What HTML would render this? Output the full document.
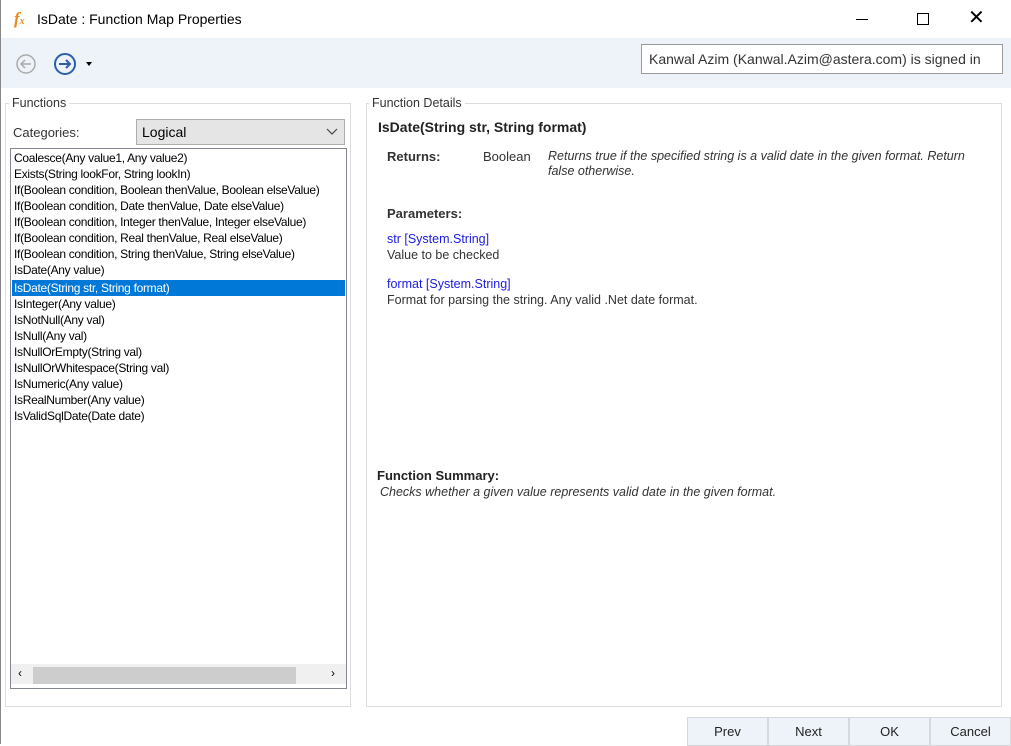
<!DOCTYPE html><html><head><style>
body{margin:0;width:1011px;height:744px;background:#fff;font-family:"Liberation Sans",sans-serif;position:relative;overflow:hidden;font-size:12px;color:#000}
.a{position:absolute}
.gb{position:absolute;border:1px solid #dcdcdc}
.gl{position:absolute;background:#fff;padding:0 3px;color:#333;font-size:12.5px}
.li{position:absolute;left:3px;white-space:nowrap;font-size:12px;letter-spacing:-0.3px;line-height:16px}
.btn{position:absolute;top:717px;width:79px;height:27px;background:#eef3f9;border:1px solid #d5d9de;text-align:center;line-height:27px;font-size:13px;color:#222}
</style></head><body>
<div class="a" style="left:0;top:0;width:1px;height:744px;background:#888"></div>
<div class="a" style="left:14px;top:9px;color:#e8891e;font-style:italic;font-weight:bold;font-family:'Liberation Serif',serif;font-size:17px">f<span style="font-size:10px">x</span></div>
<div class="a" style="left:37px;top:11px;font-size:14px">IsDate : Function Map Properties</div>
<div class="a" style="left:856px;top:19px;width:12px;height:1px;background:#000"></div>
<div class="a" style="left:917px;top:13px;width:10px;height:10px;border:1px solid #000"></div>
<div class="a" style="left:968px;top:8px;font-size:20px;line-height:20px">✕</div>
<div class="a" style="left:1px;top:38px;width:1010px;height:50px;background:#eef3f9"></div>
<svg class="a" style="left:15px;top:53px" width="22" height="22"><circle cx="11" cy="11" r="9" fill="none" stroke="#aaa" stroke-width="1.5"/><path d="M16 11H6M10 7L6 11L10 15" fill="none" stroke="#aaa" stroke-width="1.5"/></svg>
<svg class="a" style="left:53px;top:52px" width="24" height="24"><circle cx="12" cy="12" r="10" fill="none" stroke="#2d5fa6" stroke-width="2"/><path d="M6 12H17M13 8L17 12L13 16" fill="none" stroke="#2d5fa6" stroke-width="2"/></svg>
<div class="a" style="left:86px;top:62px;border-left:3px solid transparent;border-right:3px solid transparent;border-top:4px solid #000"></div>
<div class="a" style="left:641px;top:44px;width:360px;height:28px;background:#fff;border:1px solid #999;font-size:14px;line-height:28px;text-indent:7px;color:#333">Kanwal Azim (Kanwal.Azim@astera.com) is signed in</div>
<div class="gb" style="left:5px;top:103px;width:344px;height:602px"></div>
<div class="gl" style="left:9px;top:96px">Functions</div>
<div class="a" style="left:13px;top:125px;font-size:13px;color:#333">Categories:</div>
<div class="a" style="left:136px;top:119px;width:207px;height:24px;background:#e5e5e5;border:1px solid #adadad;font-size:14px;line-height:24px;text-indent:5px">Logical<svg style="position:absolute;right:6px;top:8px" width="12" height="8"><path d="M1 1L6 6L11 1" fill="none" stroke="#444" stroke-width="1.2"/></svg></div>
<div class="a" style="left:10px;top:148px;width:335px;height:539px;border:1px solid #828790;overflow:hidden">
<div class="li" style="top:1px">Coalesce(Any value1, Any value2)</div>
<div class="li" style="top:17px">Exists(String lookFor, String lookIn)</div>
<div class="li" style="top:33px">If(Boolean condition, Boolean thenValue, Boolean elseValue)</div>
<div class="li" style="top:49px">If(Boolean condition, Date thenValue, Date elseValue)</div>
<div class="li" style="top:65px">If(Boolean condition, Integer thenValue, Integer elseValue)</div>
<div class="li" style="top:81px">If(Boolean condition, Real thenValue, Real elseValue)</div>
<div class="li" style="top:97px">If(Boolean condition, String thenValue, String elseValue)</div>
<div class="li" style="top:113px">IsDate(Any value)</div>
<div class="a" style="left:1px;top:131px;width:333px;height:16px;background:#0078d7"></div>
<div class="li" style="top:131px;color:#fff">IsDate(String str, String format)</div>
<div class="li" style="top:147px">IsInteger(Any value)</div>
<div class="li" style="top:163px">IsNotNull(Any val)</div>
<div class="li" style="top:179px">IsNull(Any val)</div>
<div class="li" style="top:195px">IsNullOrEmpty(String val)</div>
<div class="li" style="top:211px">IsNullOrWhitespace(String val)</div>
<div class="li" style="top:227px">IsNumeric(Any value)</div>
<div class="li" style="top:243px">IsRealNumber(Any value)</div>
<div class="li" style="top:259px">IsValidSqlDate(Date date)</div>
<div class="a" style="left:0;top:515px;width:335px;height:20px;background:#f0f0f0"></div>
<div class="a" style="left:22px;top:518px;width:263px;height:17px;background:#cdcdcd"></div>
<div class="a" style="left:7px;top:517px;font-size:12px">&#8249;</div>
<div class="a" style="left:320px;top:517px;font-size:12px">&#8250;</div>
</div>
<div class="gb" style="left:366px;top:103px;width:634px;height:602px"></div>
<div class="gl" style="left:369px;top:96px">Function Details</div>
<div class="a" style="left:378px;top:119px;font-size:14px;font-weight:bold;color:#222">IsDate(String str, String format)</div>
<div class="a" style="left:387px;top:149px;font-size:13px;font-weight:bold;color:#333">Returns:</div>
<div class="a" style="left:483px;top:149px;font-size:13px;color:#333">Boolean</div>
<div class="a" style="left:548px;top:149px;width:440px;font-size:12.5px;font-style:italic;color:#333;line-height:15px">Returns true if the specified string is a valid date in the given format. Return false otherwise.</div>
<div class="a" style="left:387px;top:206px;font-size:13px;font-weight:bold;color:#333">Parameters:</div>
<div class="a" style="left:387px;top:232px;font-size:12.5px;color:#1a1ae6">str [System.String]</div>
<div class="a" style="left:387px;top:248px;font-size:12.5px;color:#333">Value to be checked</div>
<div class="a" style="left:387px;top:277px;font-size:12.5px;color:#1a1ae6">format [System.String]</div>
<div class="a" style="left:387px;top:293px;font-size:12.5px;color:#333">Format for parsing the string. Any valid .Net date format.</div>
<div class="a" style="left:377px;top:468px;font-size:13px;font-weight:bold;color:#222">Function Summary:</div>
<div class="a" style="left:380px;top:485px;font-size:12.5px;font-style:italic;color:#333">Checks whether a given value represents valid date in the given format.</div>
<div class="btn" style="left:687px">Prev</div>
<div class="btn" style="left:768px">Next</div>
<div class="btn" style="left:849px">OK</div>
<div class="btn" style="left:930px">Cancel</div>
</body></html>
